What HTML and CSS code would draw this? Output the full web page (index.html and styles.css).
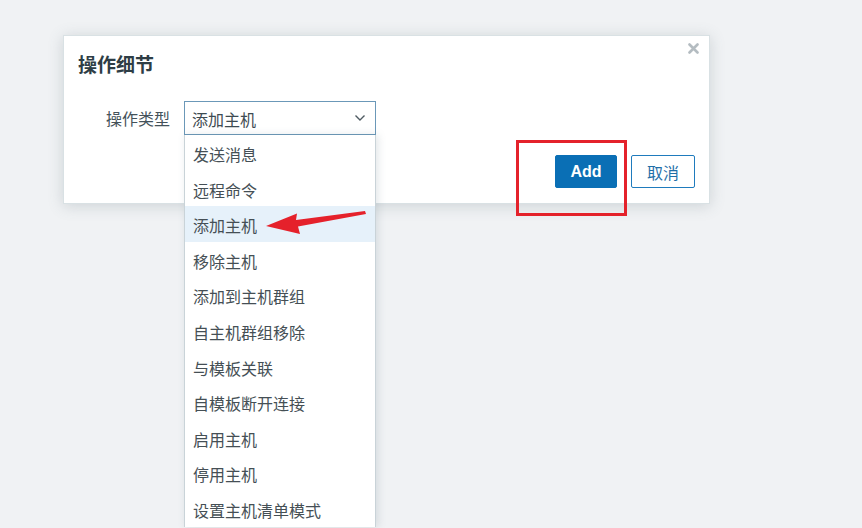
FILE: index.html
```html
<!DOCTYPE html>
<html lang="zh">
<head>
<meta charset="utf-8">
<title>操作细节</title>
<link rel="stylesheet" href="styles.css">
</head>
<body>
<div class="page">
  <div class="dialog">
    <button class="close" aria-label="close">
      <svg width="11" height="11" viewBox="0 0 11 11"><path d="M1.5 1.5 L9.5 9.5 M9.5 1.5 L1.5 9.5" stroke="#b4bcc1" stroke-width="2.6" stroke-linecap="round"/></svg>
    </button>
    <h2 class="title">操作细节</h2>
    <div class="form-row">
      <label class="label">操作类型</label>
      <div class="select">
        <span class="select-value">添加主机</span>
        <svg class="chevron" width="12" height="8" viewBox="0 0 12 8"><path d="M1.5 1.5 L6 6 L10.5 1.5" fill="none" stroke="#4f5b62" stroke-width="1.4"/></svg>
        <ul class="options">
          <li>发送消息</li>
          <li>远程命令</li>
          <li class="active">添加主机</li>
          <li>移除主机</li>
          <li>添加到主机群组</li>
          <li>自主机群组移除</li>
          <li>与模板关联</li>
          <li>自模板断开连接</li>
          <li>启用主机</li>
          <li>停用主机</li>
          <li>设置主机清单模式</li>
        </ul>
      </div>
    </div>
    <div class="footer">
      <button class="btn btn-primary">Add</button>
      <button class="btn btn-secondary">取消</button>
    </div>
  </div>
  <div class="mark-box"></div>
  <svg class="mark-arrow" width="110" height="32" viewBox="0 0 110 32">
    <path d="M103 5 L34 14 L35 7.5 L4 20 L38 28 L36 20.5 L104 8 Z" fill="#e5212b"/>
  </svg>
</div>
</body>
</html>
```

FILE: styles.css
```css
html, body {
  margin: 0;
  padding: 0;
}
body {
  background: #f0f2f4;
  font-family: "Noto Sans CJK SC", "Noto Sans", sans-serif;
  color: #384850;
  width: 862px;
  height: 528px;
  overflow: hidden;
}
.page {
  position: relative;
  width: 862px;
  height: 528px;
  padding: 35px 0 0 63px;
  box-sizing: border-box;
}
.dialog {
  position: relative;
  width: 647px;
  height: 169px;
  box-sizing: border-box;
  background: #ffffff;
  border: 1px solid #d9e1e4;
  box-shadow: 0 2px 14px rgba(80, 100, 110, 0.22);
  padding: 0 14px;
  display: flex;
  flex-direction: column;
}
.close {
  position: absolute;
  top: 7px;
  right: 10px;
  border: 0;
  background: none;
  padding: 0;
  width: 11px;
  height: 11px;
  display: flex;
}
.title {
  margin: 0;
  padding-top: 17px;
  font-size: 19px;
  line-height: 22px;
  font-weight: 700;
  color: #2e3d45;
}
.form-row {
  display: flex;
  align-items: center;
  gap: 14px;
  margin-top: 26px;
}
.label {
  width: 92px;
  text-align: right;
  font-size: 16px;
  color: #44525a;
}
.select {
  position: relative;
  width: 192px;
  height: 34px;
  box-sizing: border-box;
  border: 1px solid #6b98b8;
  display: flex;
  align-items: center;
  justify-content: space-between;
  padding: 0 9px 0 7px;
  font-size: 16px;
  color: #3e4b52;
}
.select-value {
  margin-top: 2px;
}
.chevron {
  display: block;
}
.options {
  position: absolute;
  top: 33px;
  left: -1px;
  width: 192px;
  margin: 0;
  padding: 0;
  list-style: none;
  background: #ffffff;
  border-left: 1px solid #c9d3d8;
  border-right: 1px solid #c9d3d8;
  box-sizing: border-box;
  box-shadow: 2px 0 8px rgba(90, 110, 120, 0.18);
  z-index: 2;
}
.options li {
  height: 35.6px;
  line-height: 38px;
  padding-left: 8px;
  font-size: 16px;
  color: #454f55;
  white-space: nowrap;
  overflow: hidden;
}
.options li.active {
  background: #e6f1fa;
}
.footer {
  display: flex;
  justify-content: flex-end;
  gap: 14px;
  margin-top: 20px;
}
.btn {
  height: 33px;
  box-sizing: border-box;
  border-radius: 2px;
  padding: 0;
  cursor: pointer;
}
.btn-primary {
  width: 62px;
  background: #0a6fb5;
  border: 1px solid #0a6fb5;
  color: #ffffff;
  font-family: "Liberation Sans", Arial, sans-serif;
  font-weight: 700;
  font-size: 16px;
}
.btn-secondary {
  width: 64px;
  background: #ffffff;
  border: 1px solid #1f7bbd;
  color: #1f6fa8;
  font-family: "Noto Sans CJK SC", sans-serif;
  font-size: 16px;
}
.mark-box {
  position: absolute;
  left: 516px;
  top: 140px;
  width: 111px;
  height: 76px;
  box-sizing: border-box;
  border: 3px solid #e4222b;
  z-index: 3;
}
.mark-arrow {
  position: absolute;
  left: 262px;
  top: 206px;
  z-index: 3;
}
```
